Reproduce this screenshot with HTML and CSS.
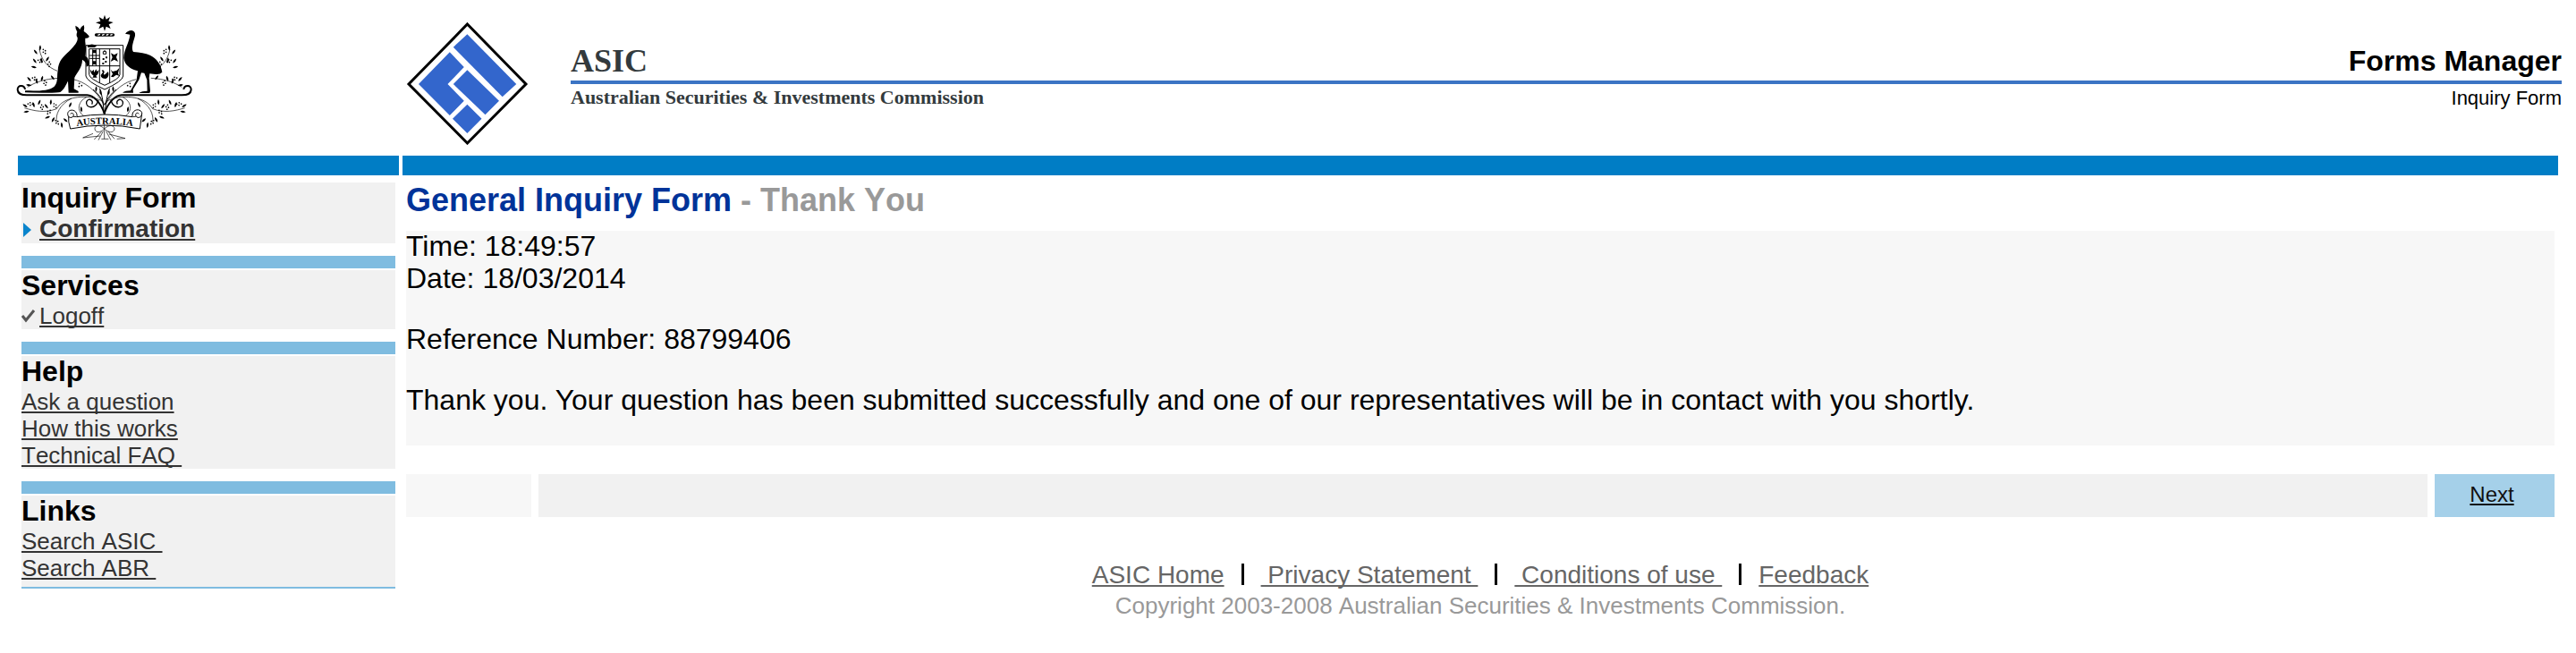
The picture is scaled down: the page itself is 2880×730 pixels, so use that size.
FILE: index.html
```html
<!DOCTYPE html>
<html lang="en">
<head>
<meta charset="utf-8">
<title>ASIC Forms Manager - Inquiry Form</title>
<link rel="stylesheet" href="styles.css">
</head>
<body>
<header class="header">
  <svg class="crest" viewBox="54 36 594 450" role="img" aria-label="Australian coat of arms">
    <defs>
      <path id="leaf" d="M0 0Q-6-9 1-19Q7-9 0 0Z"/>
      <g id="sprig">
        <use href="#leaf"/>
        <use href="#leaf" transform="translate(-9 12) rotate(-40)"/>
        <circle cx="11" cy="-4" r="2.500"/><circle cx="18" cy="0" r="2.500"/><circle cx="11" cy="5" r="2.500"/>
        <circle cx="18" cy="9" r="2.500"/>
      </g>
      <g id="branches" fill="#000">
        <g fill="none" stroke="#000" stroke-width="2">
          <path d="M192 238C160 225 140 205 132 165"/>
          <path d="M348 350C320 300 285 275 245 266M196 262C150 265 120 275 92 292"/>
          <path d="M345 340C300 315 215 320 190 365C150 380 115 372 82 362"/>
          <path d="M240 330C200 350 185 385 190 410"/>
          <path d="M290 326C262 340 255 370 282 390"/>
        </g>
        <use href="#sprig" x="134" y="170"/>
        <use href="#sprig" transform="translate(122 212) rotate(-40)"/>
        <use href="#sprig" transform="translate(154 206) rotate(30)"/>
        <use href="#sprig" transform="translate(104 272) rotate(-45)"/>
        <use href="#sprig" transform="translate(138 272) rotate(15)"/>
        <use href="#leaf" transform="translate(182 268) rotate(-40)"/>
        <use href="#sprig" transform="translate(92 360) rotate(-60)"/>
        <use href="#sprig" transform="translate(128 352) rotate(20)"/>
        <use href="#sprig" transform="translate(170 352)"/>
        <use href="#sprig" transform="translate(168 390) rotate(-115)"/>
        <use href="#sprig" transform="translate(206 410) rotate(170)"/>
        <use href="#leaf" transform="translate(232 360) rotate(20)"/>
        <use href="#leaf" transform="translate(274 376) rotate(-10)"/>
        <circle cx="266" cy="280" r="2.500"/><circle cx="274" cy="287" r="2.500"/><circle cx="265" cy="290" r="2.500"/>
        <use href="#leaf" transform="translate(322 308)"/>
        <use href="#leaf" transform="translate(338 318) rotate(-8)"/>
      </g>
    </defs>
    <use href="#branches"/>
    <use href="#branches" transform="translate(702 0) scale(-1 1)"/>
    <path d="M351 50L356 65L369 57L364 71L380 75L365 82L371 96L356 89L351 104L346 89L331 97L337 82L321 76L337 71L332 57L346 65Z"/>
    <path d="M323 117H379" stroke="#000" stroke-width="11" stroke-linecap="round"/>
    <path d="M328 118l8-3M342 118l8-3M356 118l8-3M370 118l7-3" stroke="#fff" stroke-width="4"/>
    <g fill="none" stroke="#000">
      <path stroke-width="6" d="M84 300C82 284 58 284 59 301C60 316 76 319 90 319H292C312 320 336 340 350 380M616 300C618 284 642 284 641 301C640 316 624 319 610 319H408C388 320 364 340 350 380"/>
      <path stroke-width="4" d="M330 336C320 370 286 362 290 342C296 326 316 336 308 350M372 336C382 370 416 362 412 342C406 326 386 336 394 350"/>
      <path stroke-width="3" d="M312 300Q336 318 350 352Q366 318 390 300M334 296Q346 320 350 400Q356 320 368 296"/>
    </g>
    <path d="M84 304C120 305 165 306 182 290C196 275 190 255 194 236C196 205 212 190 232 172C248 154 262 142 260 126Q254 118 259 107Q252 96 253 86Q263 90 268 99Q272 88 281 84Q285 94 281 105Q290 110 299 121Q300 129 286 128C284 142 290 155 288 170L286 188Q298 195 299 220Q291 228 289 213Q284 204 276 200C276 228 257 244 250 260L248 298L263 306V311H230L228 272C222 282 216 300 202 309Q190 313 84 310Z"/>
    <path d="M420 113Q430 101 442 102Q455 105 453 120C447 142 439 160 447 174Q480 176 503 185C525 195 541 218 544 242Q536 251 522 249L502 247L500 262L504 306L502 312H466Q476 305 494 305L493 268L484 245L474 244L466 268L446 300L447 311H411Q420 304 438 304L458 268L462 238C440 232 418 220 415 194C416 165 433 145 436 116Z"/>
    <path d="M288 152H413V255Q412 272 351 300Q290 272 288 255Z" fill="#fff" stroke="#000" stroke-width="3"/>
    <path d="M299 164H402V250Q402 264 351 286Q300 264 299 250Z" fill="none" stroke="#000" stroke-width="3"/>
    <path d="M334 164V278M368 164V278M299 221H402" stroke="#000" stroke-width="3"/>
    <path d="M293 154Q308 143 324 154L318 159H294ZM286 190Q298 188 298 220L290 224Z"/>
    <g stroke="#000" stroke-width="3" fill="none">
      <path d="M311 166V220M322 166V220M301 186H333M301 196H333"/>
      <path d="M346 173H356V181H346ZM351 168V174"/>
    </g>
    <path d="M311 167h11v11h-11ZM311 205h11v11h-11ZM344 195h6v6h-6ZM354 190h6v6h-6ZM352 204h6v6h-6ZM343 210h6v6h-6ZM372 178L383 184L395 178L390 192L396 207L383 200L371 207L377 192Z"/>
    <path d="M302 232L308 240L314 233L316 243L322 232L326 240L332 234Q331 250 322 254L326 260H310L314 254Q304 250 302 232ZM341 236Q350 232 350 243Q345 252 352 250L363 240Q368 258 355 264Q338 264 338 252L345 242ZM371 233L378 240L392 236L400 228L396 246L400 254L390 251L379 259L372 257L378 248Z"/>
    <path d="M230 384Q240 392 258 392Q351 376 444 392Q464 392 476 380L469 432Q351 408 236 432Q228 410 230 384Z" fill="#fff" stroke="#000" stroke-width="3"/>
    <g fill="#fff" stroke="#000" stroke-width="3">
      <path d="M258 392C262 366 228 362 227 382Q228 396 240 394C254 388 244 374 236 382"/>
      <path d="M444 392C440 364 474 362 476 380Q474 396 462 394C448 388 458 372 466 382"/>
    </g>
    <path id="motto" d="M244 425Q351 407 458 425" fill="none"/>
    <text class="motto"><textPath href="#motto" startOffset="50%" text-anchor="middle">AUSTRALIA</textPath></text>
    <g fill="none" stroke="#000" stroke-width="2">
      <path d="M350 432C330 412 312 424 320 438C328 448 342 440 350 432C370 412 390 424 382 438C374 448 358 440 350 432Z"/>
      <path d="M340 442L316 468M346 440L330 470M356 440L372 470M362 440L384 466M336 456L278 462L312 448M366 450L420 464L392 466M340 466H364M350 418V466"/>
    </g>
  </svg>
  <svg class="logo" viewBox="454 24 137 138" role="img" aria-label="ASIC logo">
    <path d="M522.500 27L588 94L522.500 160L457 94Z" fill="#fff" stroke="#000" stroke-width="3"/>
    <g fill="#36c">
      <path d="M522.400 38.300L577.300 94L561.700 108.300L506.800 52.700Z"/>
      <path d="M502.800 58.300L518.800 75L500.500 94L518.800 112.700L502.800 129L468 94Z"/>
      <path d="M522.400 78.300L558 112.700L542.500 128.300L506.800 94Z"/>
      <path d="M522.400 116.700L538.500 132.700L522.400 149L506 132.700Z"/>
    </g>
  </svg>
  <div class="masthead">
    <div class="masthead-top">
      <span class="agency">ASIC</span>
      <span class="app-name">Forms Manager</span>
    </div>
    <div class="masthead-bottom">
      <span class="agency-full">Australian Securities &amp; Investments Commission</span>
      <span class="form-name">Inquiry Form</span>
    </div>
  </div>
</header>
<div class="band"><div class="band-side"></div><div class="band-main"></div></div>
<div class="page">
  <nav class="sidebar">
    <section class="menu">
      <h2 class="menu-title">Inquiry Form</h2>
      <div class="menu-item menu-current">
        <svg class="mark" viewBox="0 0 20 20" aria-hidden="true"><path d="M2 3L11 11L2 19Z" fill="#0a84cc"/></svg><a href="#">Confirmation</a>
      </div>
    </section>
    <section class="menu">
      <h2 class="menu-title">Services</h2>
      <div class="menu-item">
        <svg class="mark" viewBox="0 0 20 20" aria-hidden="true"><path d="M1 10L5 15L14 4" fill="none" stroke="#555" stroke-width="3"/></svg><a href="#">Logoff</a>
      </div>
    </section>
    <section class="menu">
      <h2 class="menu-title">Help</h2>
      <div class="menu-item"><a href="#">Ask a question</a></div>
      <div class="menu-item"><a href="#">How this works</a></div>
      <div class="menu-item"><a href="#">Technical FAQ&nbsp;</a></div>
    </section>
    <section class="menu menu-last">
      <h2 class="menu-title">Links</h2>
      <div class="menu-item"><a href="#">Search ASIC&nbsp;</a></div>
      <div class="menu-item"><a href="#">Search ABR&nbsp;</a></div>
    </section>
  </nav>
  <div class="content">
    <main>
      <h1 class="title">General Inquiry Form <span class="title-step">- Thank You</span></h1>
      <div class="panel">
        <div class="stamp"><div>Time: 18:49:57</div><div>Date: 18/03/2014</div></div>
        <p>Reference Number: 88799406</p>
        <p>Thank you. Your question has been submitted successfully and one of our representatives will be in contact with you shortly.</p>
      </div>
      <div class="actions">
        <div class="action-back"></div>
        <div class="action-fill"></div>
        <a class="action-next" href="#">Next</a>
      </div>
    </main>
    <footer class="footer">
      <div class="footer-links">
        <a href="#">ASIC Home</a><i class="sep"></i><a href="#">&nbsp;Privacy Statement&nbsp;</a><i class="sep"></i><a href="#">&nbsp;Conditions of use&nbsp;</a><i class="sep"></i><a href="#">Feedback</a>
      </div>
      <div class="copyright">Copyright 2003-2008 Australian Securities &amp; Investments Commission.</div>
    </footer>
  </div>
</div>
</body>
</html>
```

FILE: styles.css
```css
* { box-sizing: border-box; }

body {
  margin: 0;
  background: #fff;
  color: #000;
  font-family: "Liberation Sans", Arial, Helvetica, sans-serif;
  font-size: 32px;
  line-height: 34px;
}

h1, h2, p { margin: 0; }

a {
  color: #333;
  text-decoration: underline;
  text-decoration-thickness: 2px;
  text-underline-offset: 2px;
  text-decoration-skip-ink: none;
}

.header {
  display: grid;
  grid-template-columns: 436px 184px 1fr;
  align-items: start;
  min-height: 174px;
  padding: 12px 16px 0 18px;
}

.crest { width: 198px; height: 150px; }
.motto { font: bold 32px "Liberation Serif", serif; }
.logo { width: 137px; height: 138px; margin-top: 12px; }
.masthead { padding-top: 36px; }

.masthead-top,
.masthead-bottom {
  display: flex;
  justify-content: space-between;
}

.masthead-top {
  padding-bottom: 2px;
  border-bottom: 4px solid #3b74c4;
  line-height: 40px;
}

.agency,
.agency-full {
  color: #333a3d;
  font-family: "Liberation Serif", "Times New Roman", serif;
  font-weight: bold;
  font-kerning: none;
}

.agency { font-size: 36px; }
.agency-full { font-size: 22px; line-height: 30px; }
.app-name { font-weight: bold; }
.form-name { font-size: 22px; line-height: 32px; }

.band {
  display: grid;
  grid-template-columns: 426px 1fr;
  gap: 4px;
  padding: 0 20px;
}

.band-side,
.band-main { height: 22px; background: #007dc5; }

.page {
  display: grid;
  grid-template-columns: 418px 1fr;
  gap: 12px;
  align-items: start;
  padding: 8px 24px;
}

.sidebar,
.title,
.footer { font-kerning: none; }

.menu { background: #f1f1f1; }

.menu + .menu {
  margin-top: 14px;
  border-top: 14px solid #7fbce0;
  box-shadow: inset 0 2px #fff;
  padding-top: 2px;
}

.menu-last {
  padding-bottom: 6px;
  border-bottom: 2px solid #7fbce0;
}

.menu-title {
  padding-bottom: 2px;
  font-size: 32px;
  line-height: 34px;
}

.menu-item {
  display: flex;
  align-items: center;
  font-size: 26px;
  line-height: 30px;
}

.menu-current {
  font-size: 28px;
  font-weight: bold;
  line-height: 32px;
}

.mark { width: 20px; height: 20px; }

.title {
  padding-bottom: 14px;
  color: #039;
  font-size: 36px;
  line-height: 40px;
}

.title-step { color: #999; }

.panel {
  display: grid;
  gap: 34px;
  padding-bottom: 34px;
  background: #f7f7f7;
}

.stamp { display: grid; gap: 2px; }

.actions {
  display: grid;
  grid-template-columns: 140px 1fr 134px;
  gap: 8px;
  min-height: 48px;
  margin-top: 32px;
}

.action-back { background: #f7f7f7; }
.action-fill { background: #f1f1f1; }

.action-next {
  padding-right: 6px;
  background: #a5d0e9;
  color: #111;
  font-size: 24px;
  line-height: 46px;
  text-align: center;
}

.footer {
  margin-top: 48px;
  text-align: center;
}

.footer-links {
  display: flex;
  justify-content: center;
  font-size: 28px;
}

.footer-links a { color: #666; }

.sep {
  width: 3px;
  height: 24px;
  margin: 4px 19px 0;
  background: #000;
}

.copyright {
  color: #999;
  font-size: 26px;
}
```
